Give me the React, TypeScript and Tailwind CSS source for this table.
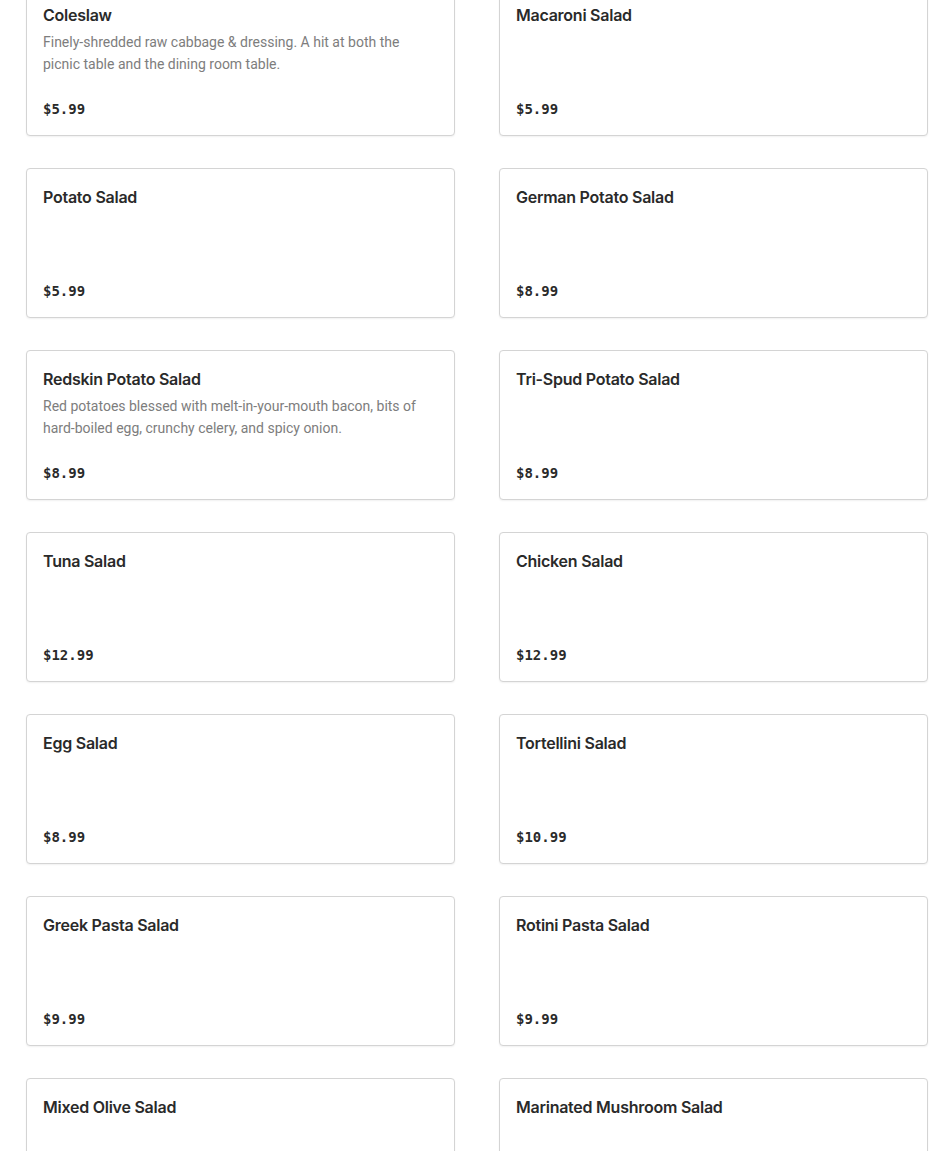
import React from 'react';

interface MenuItem {
  name: string;
  description?: string;
  price: string;
}

const ITEMS: MenuItem[] = [
  { name: 'Coleslaw', description: 'Finely-shredded raw cabbage & dressing. A hit at both the picnic table and the dining room table.', price: '$5.99' },
  { name: 'Macaroni Salad', price: '$5.99' },
  { name: 'Potato Salad', price: '$5.99' },
  { name: 'German Potato Salad', price: '$8.99' },
  { name: 'Redskin Potato Salad', description: 'Red potatoes blessed with melt-in-your-mouth bacon, bits of hard-boiled egg, crunchy celery, and spicy onion.', price: '$8.99' },
  { name: 'Tri-Spud Potato Salad', price: '$8.99' },
  { name: 'Tuna Salad', price: '$12.99' },
  { name: 'Chicken Salad', price: '$12.99' },
  { name: 'Egg Salad', price: '$8.99' },
  { name: 'Tortellini Salad', price: '$10.99' },
  { name: 'Greek Pasta Salad', price: '$9.99' },
  { name: 'Rotini Pasta Salad', price: '$9.99' },
  { name: 'Mixed Olive Salad', price: '$9.99' },
  { name: 'Marinated Mushroom Salad', price: '$9.99' },
];

const MenuCard: React.FC<{ item: MenuItem }> = ({ item }) => (
  <div className="h-[150px] flex flex-col bg-white border border-[#d4d4d4] rounded-[4px] p-4 shadow-[0_1px_2px_rgba(0,0,0,0.06)]">
    <h3 className="text-[16px] leading-6 font-semibold tracking-[-0.25px] text-[#2a2a2a]">{item.name}</h3>
    {item.description && (
      <p className="mt-1 text-[14px] leading-[22px] text-[#7d7d7d] font-['Roboto',sans-serif]">{item.description}</p>
    )}
    <div className="mt-auto text-[14px] leading-5 font-bold text-[#2a2a2a] font-['DejaVu_Sans_Mono',monospace]">
      {item.price}
    </div>
  </div>
);

export default function App() {
  return (
    <div className="h-screen bg-white font-['Inter',sans-serif] overflow-hidden">
      <div className="-mt-[14px] pl-[26px] pr-[22px] grid grid-cols-2 gap-x-[44px] gap-y-[32px]">
        {ITEMS.map((item) => (
          <MenuCard key={item.name} item={item} />
        ))}
      </div>
    </div>
  );
}
